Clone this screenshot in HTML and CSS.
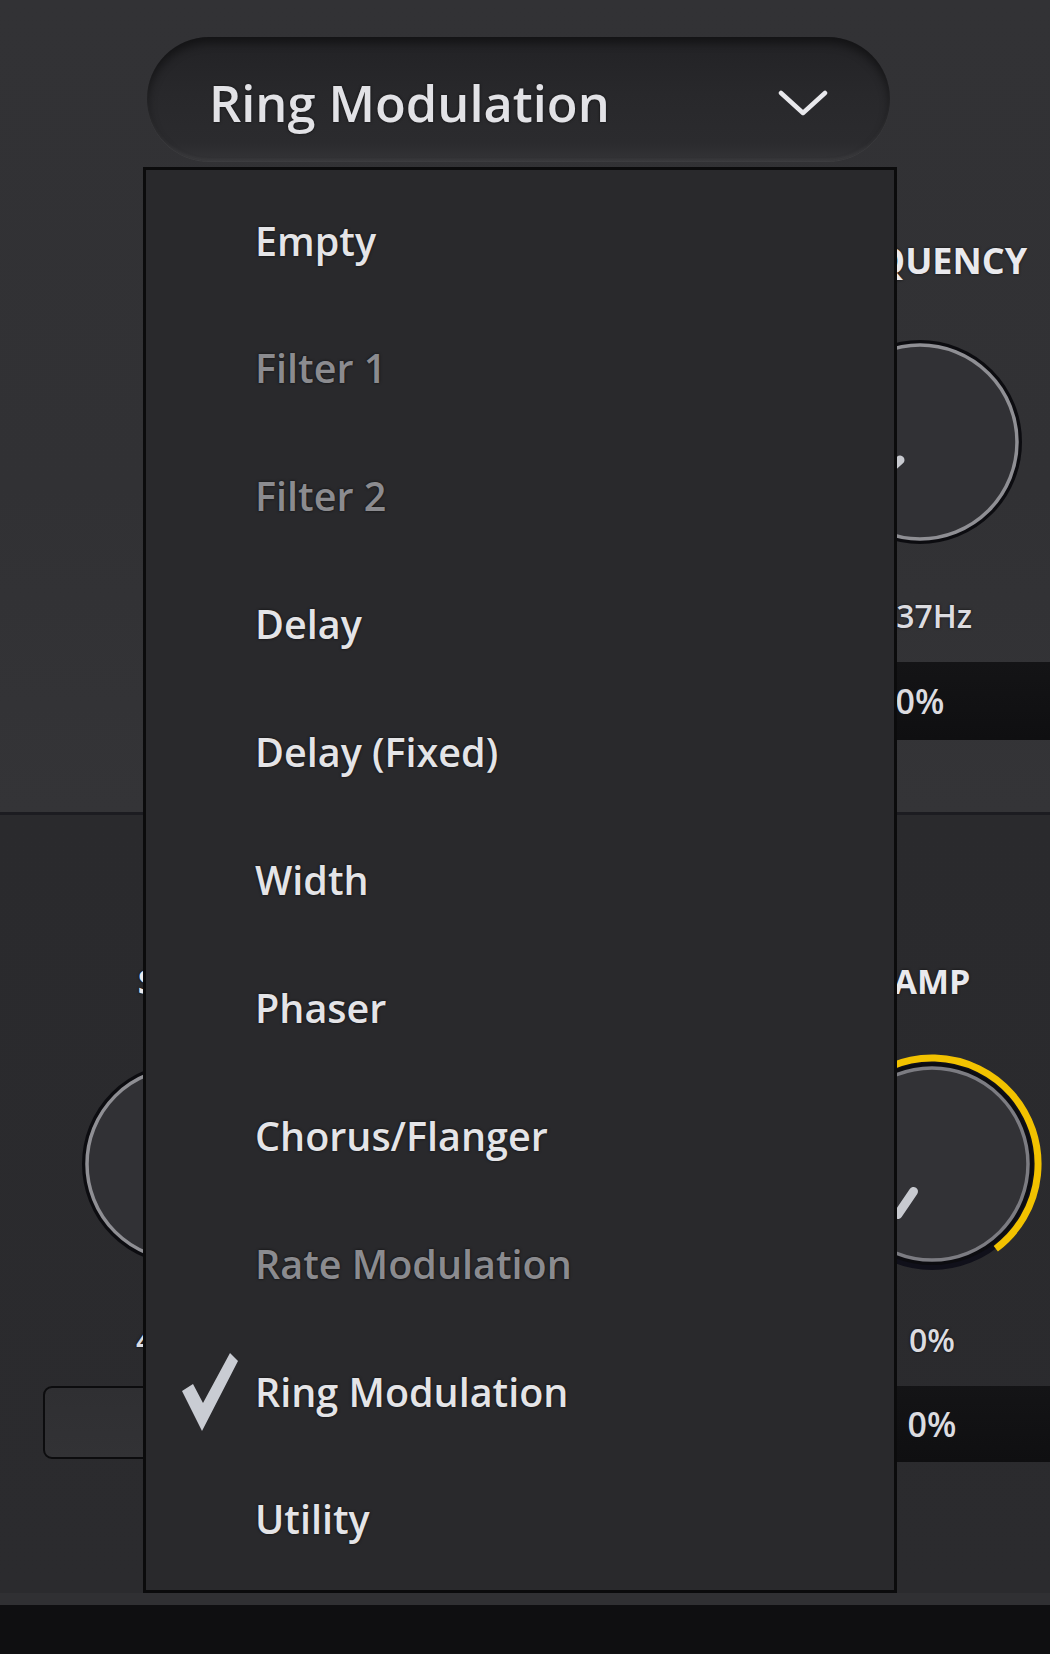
FILE: index.html
```html
<!DOCTYPE html>
<html lang="en">
<head>
<meta charset="utf-8">
<title>Ring Modulation</title>
<link rel="stylesheet" href="styles.css">
</head>
<body>
<div class="app">
  <section class="upper">
    <div class="selector">
      <span class="selector-title">Ring Modulation</span>
      <svg class="chevron" width="50" height="26" viewBox="0 0 50 26"><polyline points="3,3 25,23 47,3" /></svg>
    </div>
    <div class="module module-upper">
      <div class="col col-b">
        <div class="label">FREQUENCY</div>
        <svg class="knob knob-sm" width="220" height="220" viewBox="0 0 220 220">
          <circle cx="110" cy="110" r="99.5" class="k-shadow"/>
          <circle cx="110" cy="110" r="97" class="k-body"/>
          <line x1="90" y1="128" x2="69" y2="147" class="k-pointer"/>
        </svg>
        <div class="value value-hz">137Hz</div>
      </div>
      <div class="bar bar-upper"><span>0%</span></div>
    </div>
  </section>
  <div class="divider"></div>
  <section class="lower">
    <div class="module module-lower">
      <div class="col col-a">
        <div class="label label-shift">SHIFT</div>
        <svg class="knob" width="240" height="240" viewBox="0 0 240 240">
          <circle cx="120" cy="120" r="98.5" class="k-shadow"/>
          <circle cx="120" cy="120" r="96" class="k-body"/>
          <line x1="101" y1="147" x2="86" y2="170" class="k-pointer"/>
        </svg>
        <div class="value">400Hz</div>
      </div>
      <div class="field-cell"><div class="field"></div></div>
      <div class="col col-c">
        <div class="label">AMP</div>
        <svg class="knob" width="240" height="240" viewBox="0 0 240 240">
          <circle cx="120" cy="120" r="102" class="k-gap"/>
          <path d="M51.9 201.2 A106 106 0 1 1 183.8 204.7" class="k-arc"/>
          <circle cx="120" cy="120" r="98.5" class="k-shadow"/>
          <circle cx="120" cy="120" r="96" class="k-body k-body-dim"/>
          <line x1="101.5" y1="147.4" x2="85.9" y2="170.6" class="k-pointer"/>
        </svg>
        <div class="value">0%</div>
      </div>
      <div class="bar bar-lower"><span>0%</span></div>
    </div>
  </section>
  <footer class="footer"></footer>

  <div class="menu">
    <ul class="menu-list">
      <li class="item"><span class="check-slot"></span><span class="item-text">Empty</span></li>
      <li class="item is-disabled"><span class="check-slot"></span><span class="item-text">Filter 1</span></li>
      <li class="item is-disabled"><span class="check-slot"></span><span class="item-text">Filter 2</span></li>
      <li class="item"><span class="check-slot"></span><span class="item-text">Delay</span></li>
      <li class="item"><span class="check-slot"></span><span class="item-text">Delay (Fixed)</span></li>
      <li class="item"><span class="check-slot"></span><span class="item-text">Width</span></li>
      <li class="item"><span class="check-slot"></span><span class="item-text">Phaser</span></li>
      <li class="item"><span class="check-slot"></span><span class="item-text">Chorus/Flanger</span></li>
      <li class="item is-disabled"><span class="check-slot"></span><span class="item-text">Rate Modulation</span></li>
      <li class="item is-checked"><span class="check-slot"><svg class="check" width="60" height="82" viewBox="0 0 60 82"><polygon points="2,40 13,33 23,52 50,2 58,10 22,80"/></svg></span><span class="item-text">Ring Modulation</span></li>
      <li class="item"><span class="check-slot"></span><span class="item-text">Utility</span></li>
    </ul>
  </div>
</div>
</body>
</html>
```

FILE: styles.css
```css
html, body {
  margin: 0;
  padding: 0;
  background: #2b2b2e;
}

body {
  font-family: "Open Sans", "Noto Sans", "Liberation Sans", sans-serif;
  color: #e6e6ea;
}

.app {
  position: relative;
  width: 1050px;
  height: 1654px;
  overflow: hidden;
}

/* ---------- upper section ---------- */
.upper {
  height: 812px;
  box-sizing: border-box;
  padding-top: 37px;
  background: linear-gradient(180deg, #323235 0%, #313134 60%, #343437 100%);
}

.selector {
  margin-left: 147px;
  width: 743px;
  height: 124px;
  box-sizing: border-box;
  padding: 8px 62px 0 62px;
  border-radius: 62px;
  display: flex;
  align-items: center;
  justify-content: space-between;
  background: linear-gradient(180deg, #222225 0%, #28282b 45%, #2b2b2e 85%, #333336 100%);
  box-shadow: inset 0 6px 10px rgba(0, 0, 0, 0.45),
              inset 0 -2px 3px rgba(255, 255, 255, 0.05),
              0 1px 0 rgba(255, 255, 255, 0.05);
}

.selector-title {
  font-size: 50.5px;
  font-weight: 600;
  line-height: 60px;
  color: #e2e2e6;
  text-shadow: 0 0 3px rgba(0, 0, 0, 0.7);
}

.chevron polyline {
  fill: none;
  stroke: #e8e8ec;
  stroke-width: 4.5;
  stroke-linecap: round;
  stroke-linejoin: round;
}

.module {
  display: grid;
  align-items: start;
}

.module-upper {
  grid-template-columns: 1fr 220px 20px;
  margin-top: 80px;
}

.module-lower {
  grid-template-columns: 366px 1fr 210px 13px;
  padding-top: 146px;
}

.col {
  display: flex;
  flex-direction: column;
  align-items: center;
}

.col-a { grid-column: 1; grid-row: 1; }
.col-b { grid-column: 2; grid-row: 1; }
.col-c { grid-column: 3; grid-row: 1; }

.label {
  font-weight: 700;
  font-size: 36px;
  line-height: 40px;
  color: #e9e9ed;
  white-space: nowrap;
  text-shadow: 0 0 3px rgba(0, 0, 0, 0.7);
}

.module-lower .label {
  font-size: 34px;
}

.label-shift {
  padding-left: 4px;
}

.knob-sm {
  margin-top: 51px;
}

.module-lower .knob {
  margin-top: 43px;
}

.k-shadow {
  fill: none;
  stroke: #0c0c10;
  stroke-width: 5;
}

.k-body {
  fill: #313135;
  stroke: #8f8f94;
  stroke-width: 3.5;
}

.k-body-dim {
  fill: #323236;
  stroke: #7c7c82;
}

.k-gap {
  fill: none;
  stroke: #10101a;
  stroke-width: 8;
}

.k-arc {
  fill: none;
  stroke: #f2c200;
  stroke-width: 7;
}

.k-pointer {
  stroke: #c8cad0;
  stroke-width: 9;
  stroke-linecap: round;
}

.value {
  font-size: 32px;
  font-weight: 600;
  line-height: 40px;
  color: #dcdce0;
  white-space: nowrap;
  text-shadow: 0 0 3px rgba(0, 0, 0, 0.7);
}

.value-hz {
  padding-left: 10px;
}

.module-upper .value {
  margin-top: 44px;
}

.module-lower .value {
  margin-top: 36px;
}

.bar {
  display: flex;
  align-items: center;
  justify-content: center;
  font-size: 34px;
  font-weight: 600;
  color: #dcdce0;
  background: linear-gradient(180deg, #141416 0%, #0f0f11 100%);
}

.bar-upper {
  grid-column: 2 / 4;
  grid-row: 2;
  height: 78px;
  margin-top: 26px;
  padding-right: 20px;
}

.bar-lower {
  grid-column: 3 / 5;
  grid-row: 2;
  height: 76px;
  margin-top: 26px;
  padding-right: 13px;
}

.field-cell {
  grid-column: 1;
  grid-row: 2;
  display: flex;
  justify-content: center;
  margin-top: 26px;
}

.field {
  width: 280px;
  height: 73px;
  box-sizing: border-box;
  border: 2px solid #0c0c0e;
  border-radius: 9px;
  background: linear-gradient(180deg, #2f2f32 0%, #323235 100%);
}

.divider {
  height: 3px;
  background: #1c1c21;
}

.lower {
  height: 778px;
  background: linear-gradient(180deg, #2a2a2d 0%, #2b2b2e 100%);
}

.footer {
  height: 61px;
  box-sizing: border-box;
  border-top: 12px solid #303033;
  background: #0f0f11;
}

/* ---------- dropdown menu (overlay) ---------- */
.menu {
  position: absolute;
  left: 143px;
  top: 167px;
  width: 754px;
  height: 1426px;
  box-sizing: border-box;
  border: 3px solid #0b0b0c;
  background: #29292c;
}

.menu-list {
  list-style: none;
  margin: 0;
  padding: 7.5px 0 0 0;
}

.item {
  display: flex;
  align-items: center;
  height: 127.9px;
  line-height: 127.9px;
  padding-left: 34px;
  font-size: 39.5px;
  font-weight: 600;
  color: #e4e4e7;
  text-shadow: 0 0 3px rgba(0, 0, 0, 0.75);
}

.item.is-disabled {
  color: #8b8b8f;
}

.check-slot {
  width: 75px;
  flex: none;
  display: flex;
  align-items: center;
  height: 100%;
}

.check polygon {
  fill: #c9ccd3;
}

.item-text {
  white-space: nowrap;
}
```
